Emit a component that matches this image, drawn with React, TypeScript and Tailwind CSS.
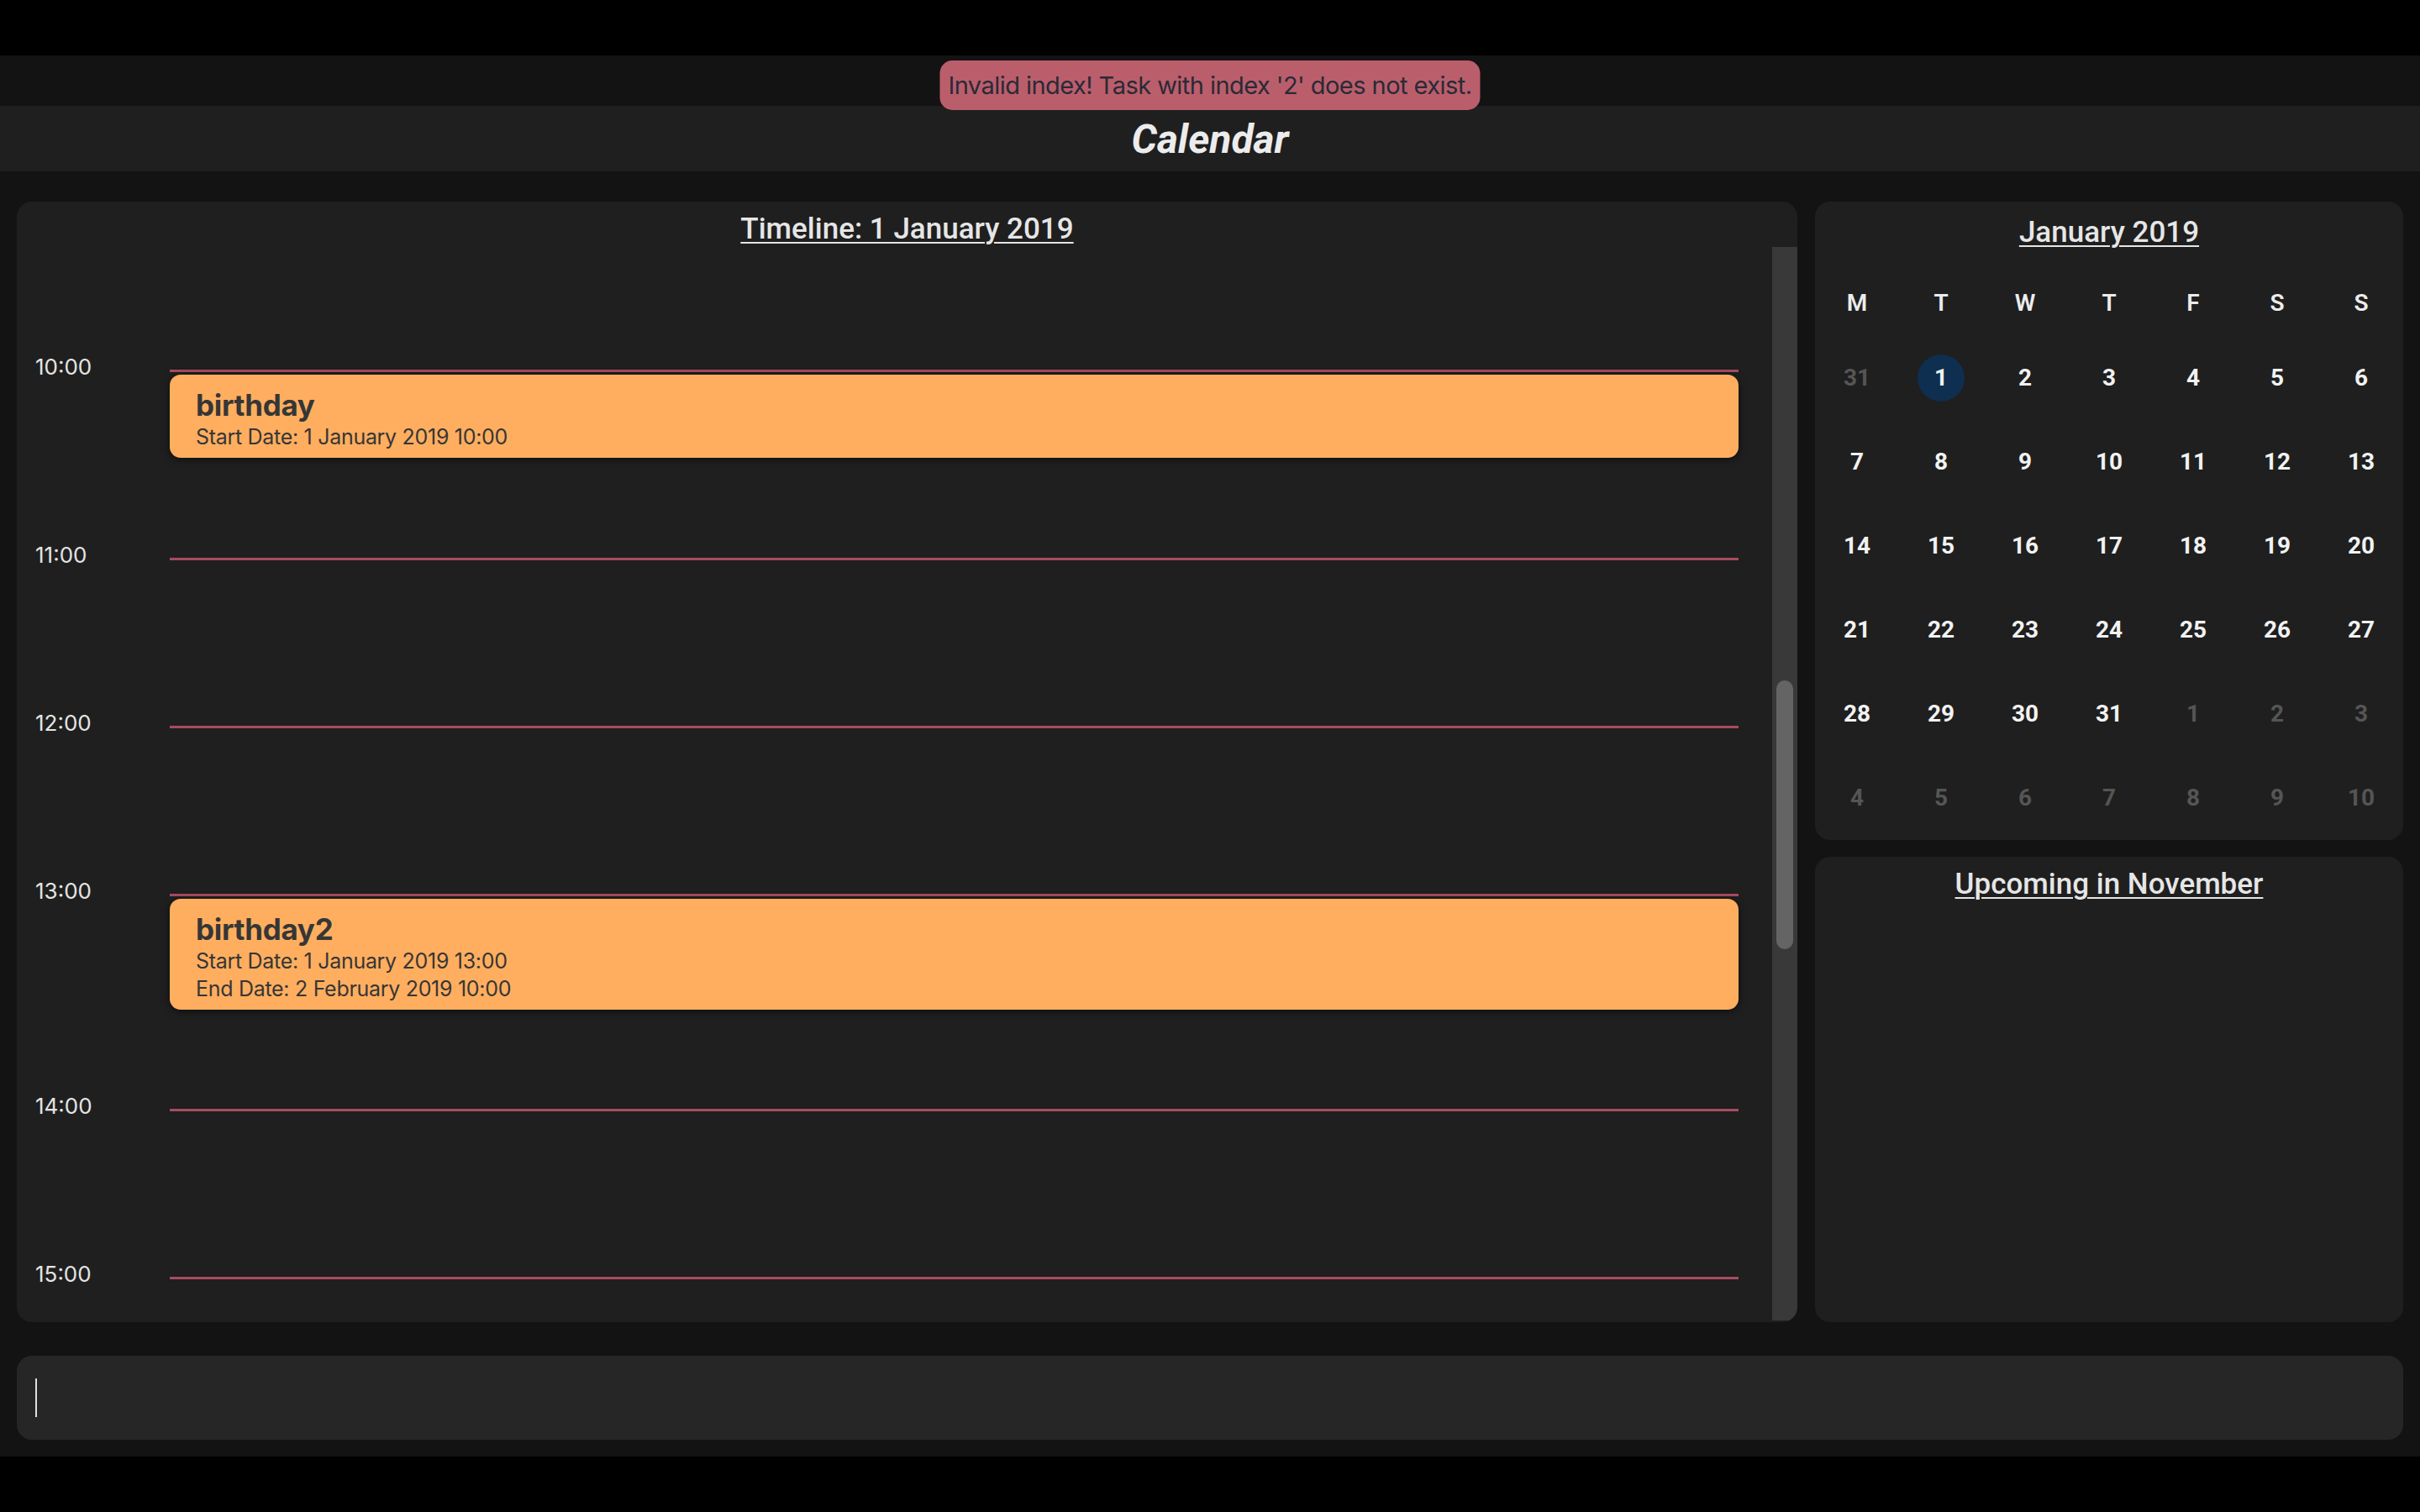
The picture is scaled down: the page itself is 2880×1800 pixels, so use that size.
import React from "react";

type Entry = {
  title: string;
  lines: string[];
};

type HourRow = {
  label: string;
  height: string;
  entry?: Entry;
};

const hourRows: HourRow[] = [
  {
    label: "10:00",
    height: "h-[224px]",
    entry: { title: "birthday", lines: ["Start Date: 1 January 2019 10:00"] },
  },
  { label: "11:00", height: "h-[200px]" },
  { label: "12:00", height: "h-[200px]" },
  {
    label: "13:00",
    height: "h-[256px]",
    entry: {
      title: "birthday2",
      lines: ["Start Date: 1 January 2019 13:00", "End Date: 2 February 2019 10:00"],
    },
  },
  { label: "14:00", height: "h-[200px]" },
  { label: "15:00", height: "h-[200px]" },
];

const weekDays = ["M", "T", "W", "T", "F", "S", "S"];

type Day = { n: number; muted?: boolean; today?: boolean };

const monthGrid: Day[][] = [
  [{ n: 31, muted: true }, { n: 1, today: true }, { n: 2 }, { n: 3 }, { n: 4 }, { n: 5 }, { n: 6 }],
  [{ n: 7 }, { n: 8 }, { n: 9 }, { n: 10 }, { n: 11 }, { n: 12 }, { n: 13 }],
  [{ n: 14 }, { n: 15 }, { n: 16 }, { n: 17 }, { n: 18 }, { n: 19 }, { n: 20 }],
  [{ n: 21 }, { n: 22 }, { n: 23 }, { n: 24 }, { n: 25 }, { n: 26 }, { n: 27 }],
  [{ n: 28 }, { n: 29 }, { n: 30 }, { n: 31 }, { n: 1, muted: true }, { n: 2, muted: true }, { n: 3, muted: true }],
  [
    { n: 4, muted: true },
    { n: 5, muted: true },
    { n: 6, muted: true },
    { n: 7, muted: true },
    { n: 8, muted: true },
    { n: 9, muted: true },
    { n: 10, muted: true },
  ],
];

const roboto = "font-['Roboto','Liberation_Sans',sans-serif]";
const inter = "font-['Inter','Liberation_Sans',sans-serif]";

function PanelTitle({ children, top }: { children: React.ReactNode; top: string }) {
  return (
    <h2
      className={`${roboto} ${top} text-center text-[35px] font-medium leading-[46px] text-[#e6e6e6] underline decoration-2 underline-offset-[4px]`}
    >
      {children}
    </h2>
  );
}

function EventCard({ entry }: { entry: Entry }) {
  return (
    <div className={`${inter} mt-[3px] rounded-[13px] bg-[#ffae5f] pb-[8px] pl-[31px] pt-[14px] text-[#363636] shadow-[0_2px_10px_rgba(0,0,0,0.55)]`}>
      <div className="text-[35px] font-bold leading-[44px] tracking-[-0.3px]">{entry.title}</div>
      {entry.lines.map((line) => (
        <div key={line} className="text-[25px] leading-[33px] tracking-[-0.3px]">
          {line}
        </div>
      ))}
    </div>
  );
}

function Timeline() {
  return (
    <section className="flex min-w-0 flex-1 flex-col overflow-hidden rounded-[18px] bg-[#1f1f1f]">
      <PanelTitle top="pt-[10px]">Timeline: 1 January 2019</PanelTitle>
      <div className="-mt-[2px] flex min-h-0 flex-1">
        <div className="min-w-0 flex-1 overflow-hidden pl-[22px] pr-[40px] pt-[146px]">
          {hourRows.map((row) => (
            <div key={row.label} className={`flex ${row.height}`}>
              <div className={`${inter} -mt-[18px] w-[160px] shrink-0 text-[26px] leading-[30px] text-[#e4e4e4]`}>
                {row.label}
              </div>
              <div className="flex min-w-0 flex-1 flex-col">
                <div className="h-[3px] bg-[#a84b60]" />
                {row.entry && <EventCard entry={row.entry} />}
              </div>
            </div>
          ))}
        </div>
        <div className="mb-[2px] w-[30px] shrink-0 bg-[#393939] pt-[516px]">
          <div className="mx-auto h-[320px] w-[20px] rounded-full bg-[#646464]" />
        </div>
      </div>
    </section>
  );
}

function MonthCalendar() {
  return (
    <section className="rounded-[18px] bg-[#1f1f1f]">
      <PanelTitle top="pt-[14px]">January 2019</PanelTitle>
      <div className={`${roboto} mt-[22px] grid grid-cols-7`}>
        {weekDays.map((d, i) => (
          <div key={i} className="flex h-[78px] items-center justify-center text-[28px] font-semibold text-[#ececec]">
            {d}
          </div>
        ))}
        {monthGrid.flat().map((day, i) => (
          <div key={i} className="flex h-[100px] items-center justify-center">
            <span
              className={`flex h-[56px] w-[56px] items-center justify-center rounded-full text-[28px] font-bold ${
                day.today ? "bg-[#0e2f4f] text-[#f2f2f2]" : day.muted ? "text-[#555555]" : "text-[#f2f2f2]"
              }`}
            >
              {day.n}
            </span>
          </div>
        ))}
      </div>
    </section>
  );
}

export default function App() {
  return (
    <div className="h-[1800px] w-[2880px] overflow-hidden bg-black">
      <div className="h-[66px]" />
      <div className="relative flex h-[1668px] flex-col bg-[#131313]">
        <div className="h-[60px] bg-[#131313]" />
        <header className="h-[78px] bg-[#1f1f1f] text-center">
          <h1 className={`${roboto} pt-[2px] text-[48px] font-bold italic leading-[76px] text-[#ececec]`}>Calendar</h1>
        </header>

        <div className="absolute left-1/2 top-[6px] -translate-x-1/2 rounded-[15px] bg-[#bb5e6c] px-[10px]">
          <p className={`${inter} whitespace-nowrap text-[29px] leading-[59px] tracking-[-0.55px] text-[#2a2a36]`}>
            Invalid index! Task with index '2' does not exist.
          </p>
        </div>

        <main className="flex h-[1370px] gap-[21px] px-[20px] pt-[36px]">
          <Timeline />
          <div className="flex w-[700px] shrink-0 flex-col gap-[20px]">
            <MonthCalendar />
            <section className="flex-1 rounded-[18px] bg-[#1f1f1f]">
              <PanelTitle top="pt-[10px]">Upcoming in November</PanelTitle>
            </section>
          </div>
        </main>

        <div className="px-[20px] pt-[40px]">
          <div className="flex h-[100px] items-center rounded-[18px] bg-[#262626] pl-[22px]">
            <span className="h-[46px] w-[2px] bg-[#e0e0e0]" />
          </div>
        </div>
      </div>
    </div>
  );
}
